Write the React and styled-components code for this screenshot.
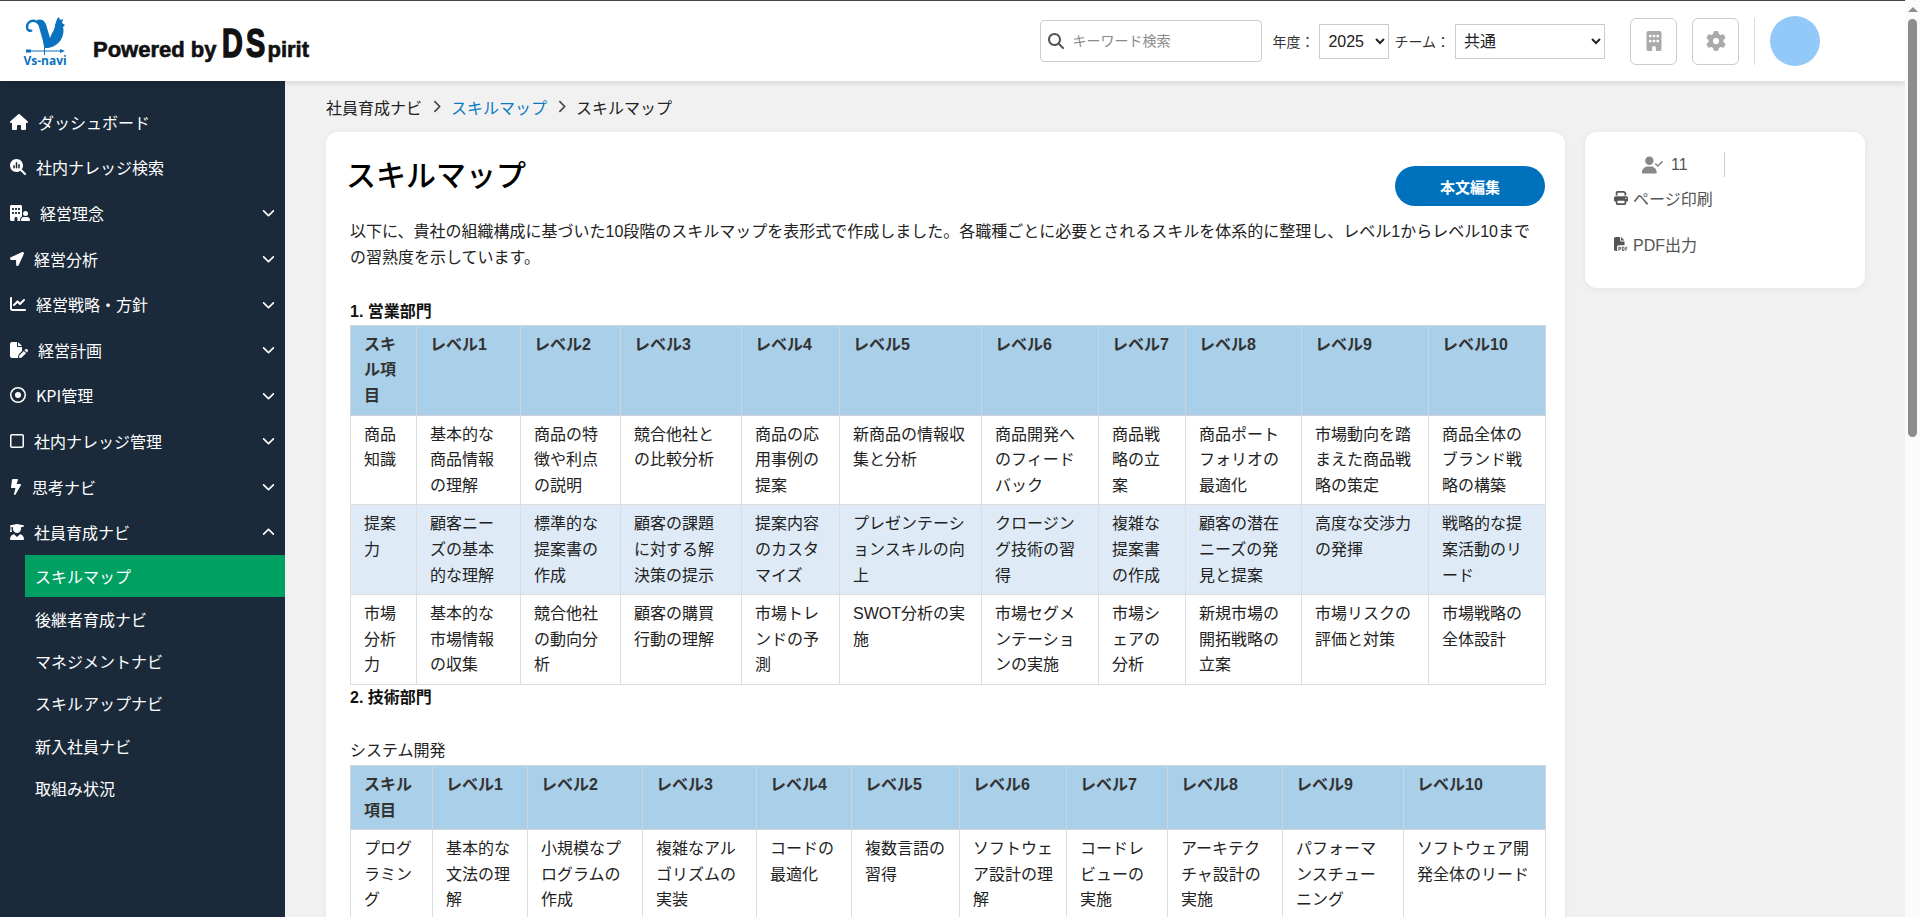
import React from "react";
import styled, { createGlobalStyle } from "styled-components";
import { FaBolt, FaLocationArrow } from "react-icons/fa";
import {
  FaHouse, FaMagnifyingGlassChart, FaBuildingUser, FaChartLine, FaFilePen,
  FaUserGraduate, FaChevronDown, FaChevronUp, FaChevronRight, FaMagnifyingGlass,
  FaBuilding, FaGear, FaUserCheck, FaPrint, FaFilePdf, FaRegCircleDot, FaRegSquare,
} from "react-icons/fa6";

const FONT = `"Liberation Sans", "Noto Sans CJK JP", sans-serif`;

const GlobalStyle = createGlobalStyle`
  body {
    margin: 0;
    background: #f1f1f1;
    color: #222;
    font-family: ${FONT};
    font-size: 16px;
  }
`;

const Viewport = styled.div`
  height: 100vh;
  display: flex;
  overflow: hidden;
`;

const Scroller = styled.div`
  flex: 1;
  min-width: 0;
  overflow-x: hidden;
  overflow-y: auto;
  scrollbar-width: none;
`;

// the browser's own scrollbar is not painted in the photograph, so it is drawn here
const ScrollRail = styled.div`
  width: 15px;
  flex: none;
  display: flex;
  flex-direction: column;
  align-items: center;
  background: #fbfbfb;
  padding-top: 7px;
`;

const ScrollArrow = styled.div`
  width: 0;
  height: 0;
  border-left: 5px solid transparent;
  border-right: 5px solid transparent;
  border-bottom: 5px solid #8d8d8d;
  margin-bottom: 7px;
`;

const ScrollThumb = styled.div`
  width: 9px;
  height: 418px;
  border-radius: 5px;
  background: #8d8d8d;
`;

const Page = styled.div`
  min-height: 1946px;
  display: flex;
  flex-direction: column;
`;

const Header = styled.header`
  height: 80px;
  flex: none;
  display: flex;
  align-items: center;
  justify-content: space-between;
  background: #fff;
  border-top: 1px solid #444;
  box-shadow: 0 2px 6px rgba(0, 0, 0, 0.12);
  position: relative;
  z-index: 2;
  padding: 0 85px 0 22px;
`;

const Brand = styled.div`
  display: flex;
  align-items: flex-end;
  gap: 25px;
`;

const LogoMark = styled.div`
  width: 46px;
  display: flex;
  flex-direction: column;
  align-items: center;
`;

const LogoName = styled.span`
  color: #0b72c0;
  font-family: "Open Sans", sans-serif;
  font-size: 12px;
  font-weight: 700;
  line-height: 12px;
  white-space: nowrap;
`;

const Powered = styled.div`
  display: flex;
  align-items: baseline;
  color: #111;
  font-weight: 700;
  font-size: 22px;
  line-height: 30px;
  white-space: nowrap;
  margin-bottom: 2px;
  -webkit-text-stroke: 0.6px #111;
`;

const BigLetter = styled.span`
  display: inline-block;
  width: 21px;
  font-size: 40px;
  line-height: 30px;
  transform: scaleX(0.72);
  transform-origin: left bottom;
  margin-left: ${(p) => p.$gap || 0}px;
  -webkit-text-stroke: 1.6px #111;
`;

const Tools = styled.div`
  display: flex;
  align-items: center;
`;

const SearchBox = styled.label`
  width: 222px;
  height: 42px;
  box-sizing: border-box;
  display: flex;
  align-items: center;
  gap: 6px;
  padding: 0 7px;
  border: 1px solid #ccc;
  border-radius: 4px;
  background: #fff;
  color: #555;
  margin-right: 10px;
  svg {
    width: 16px;
    height: 16px;
  }
`;

const SearchInput = styled.input`
  border: 0;
  outline: 0;
  min-width: 0;
  flex: 1;
  font: 14px ${FONT};
  &::placeholder {
    color: #8a8a8a;
  }
`;

const FieldLabel = styled.span`
  font-size: 14px;
  color: #333;
  white-space: nowrap;
  margin-right: ${(p) => p.$space}px;
`;

const Select = styled.select`
  height: 35px;
  width: ${(p) => p.$width}px;
  box-sizing: border-box;
  border: 1px solid #ccc;
  border-radius: 0;
  background: #fff;
  color: #222;
  padding: 0 4px;
  font: 16px ${FONT};
  margin-right: ${(p) => p.$space || 0}px;
`;

const SquareButton = styled.button`
  width: 47px;
  height: 47px;
  box-sizing: border-box;
  display: flex;
  align-items: center;
  justify-content: center;
  background: #fff;
  border: 1px solid #ccc;
  border-radius: 6px;
  color: #aaa;
  margin-left: ${(p) => p.$space}px;
  svg {
    width: 20px;
    height: 20px;
  }
`;

const Divider = styled.div`
  width: 1px;
  height: 47px;
  background: #ddd;
  margin: 0 15px;
`;

const Avatar = styled.div`
  width: 50px;
  height: 50px;
  border-radius: 50%;
  background: #93c9f9;
`;

const Body = styled.div`
  flex: 1;
  display: flex;
  align-items: stretch;
`;

const Sidebar = styled.nav`
  width: 285px;
  flex: none;
  box-sizing: border-box;
  background: #1a2a3a;
  color: #fff;
  padding-top: 18px;
`;

const NavItem = styled.div`
  height: 45.6px;
  display: flex;
  align-items: center;
  gap: 10px;
  padding: 0 10px;
  font-family: "Noto Sans CJK JP", sans-serif;
  font-size: 16px;
  white-space: nowrap;
`;

const NavIcon = styled.span`
  display: block;
  flex: none;
  width: ${(p) => p.$width}px;
  height: 16px;
  svg {
    display: block;
    width: 100%;
    height: 100%;
  }
`;

const NavChevron = styled.span`
  margin-left: auto;
  display: flex;
  svg {
    width: 13px;
    height: 13px;
  }
`;

const SubMenu = styled.div`
  padding-left: 25px;
`;

const SubItem = styled.div`
  height: 42.4px;
  display: flex;
  align-items: center;
  padding-left: 10px;
  font-family: "Noto Sans CJK JP", sans-serif;
  font-size: 16px;
  background: ${(p) => (p.$active ? "#00a062" : "transparent")};
`;

const Main = styled.main`
  flex: 1;
  min-width: 0;
  padding: 0 40px 0 41px;
`;

const Breadcrumb = styled.div`
  height: 51px;
  display: flex;
  align-items: center;
  gap: 9px;
  font-size: 16px;
  color: #222;
  svg {
    width: 11px;
    height: 13px;
    color: #444;
  }
`;

const CrumbLink = styled.a`
  color: #0b7ac4;
`;

const Columns = styled.div`
  display: flex;
  align-items: flex-start;
  gap: 20px;
`;

const Card = styled.section`
  background: #fff;
  border-radius: 12px;
  box-shadow: 0 1px 6px rgba(0, 0, 0, 0.06);
`;

const ContentCard = styled(Card)`
  flex: 1;
  min-width: 0;
  box-sizing: border-box;
  padding: 24px 20px 40px;
`;

const TitleRow = styled.div`
  display: flex;
  justify-content: space-between;
  align-items: flex-start;
`;

const Title = styled.h1`
  margin: 0;
  font-size: 30px;
  line-height: 40px;
  font-weight: 500;
  color: #000;
`;

const EditButton = styled.button`
  width: 150px;
  height: 40px;
  margin-top: 10px;
  border: 0;
  border-radius: 20px;
  background: #0071bc;
  color: #fff;
  font: 700 15px ${FONT};
`;

const Article = styled.div`
  padding-left: 4px;
  line-height: 25.6px;
`;

const Lead = styled.p`
  margin: 13px 0 29px;
`;

const Heading = styled.div`
  font-weight: 700;
  color: #111;
  margin-bottom: ${(p) => p.$after || 0}px;
`;

const SubHeading = styled.div`
  margin-bottom: 2px;
  color: #222;
`;

const Table = styled.table`
  width: 100%;
  table-layout: fixed;
  border-collapse: collapse;
  line-height: 25.6px;
`;

const Th = styled.th`
  background: #aacfe9;
  border: 1px solid #cfd4d8;
  padding: 6px 13px;
  text-align: left;
  vertical-align: top;
  font-weight: 700;
  color: #333;
`;

const Tr = styled.tr`
  &:nth-child(even) td {
    background: #deebf7;
  }
`;

const Td = styled.td`
  background: #fff;
  border: 1px solid #ddd;
  padding: 6px 13px;
  vertical-align: top;
  color: #222;
`;

const SideCard = styled(Card)`
  width: 280px;
  height: 156px;
  flex: none;
  box-sizing: border-box;
  padding: 20px 29px;
  color: #555;
`;

const ViewRow = styled.div`
  display: flex;
  align-items: center;
  height: 25px;
  padding-left: 28px;
  gap: 8px;
  color: #555;
  svg {
    width: 21px;
    height: 18px;
    color: #888;
  }
`;

const ViewDivider = styled.span`
  width: 1px;
  height: 25px;
  background: #ccc;
  margin-left: 28px;
`;

const SideAction = styled.div`
  display: flex;
  align-items: center;
  gap: 5px;
  height: 24px;
  margin-top: ${(p) => p.$top}px;
  color: #555;
  svg {
    width: 14px;
    height: 14px;
  }
`;

const Logo = () => (
  <svg width="42" height="39" viewBox="0 0 42 39">
    <path d="M21 30C20 20 19 10 13 6C8 3 3 6 3 11C3 14 6 16 8 14" fill="none" stroke="#0b72c0" strokeWidth="2.4" />
    <path d="M13 4C18 2 22 5 23 12L26 22C28 16 31 14 31 9L33 3L35 1L36 4L39 3L38 7L41 9L39 11C41 18 37 30 24 32L21 32Z" fill="#0b72c0" />
    <path d="M2 35H38" stroke="#0b72c0" strokeWidth="1" />
    <path d="M20.5 26V39" stroke="#0b72c0" strokeWidth="1" />
    <path d="M2 33.5H7V36.5H2ZM36 33L41 35L36 37Z" fill="#0b72c0" />
  </svg>
);

const menu = [
  { label: "ダッシュボード", icon: <FaHouse />, width: 18 },
  { label: "社内ナレッジ検索", icon: <FaMagnifyingGlassChart />, width: 16 },
  { label: "経営理念", icon: <FaBuildingUser />, width: 20, more: "down" },
  { label: "経営分析", icon: <FaLocationArrow />, width: 14, more: "down" },
  { label: "経営戦略・方針", icon: <FaChartLine />, width: 16, more: "down" },
  { label: "経営計画", icon: <FaFilePen />, width: 18, more: "down" },
  { label: "KPI管理", icon: <FaRegCircleDot />, width: 16, more: "down" },
  { label: "社内ナレッジ管理", icon: <FaRegSquare />, width: 14, more: "down" },
  { label: "思考ナビ", icon: <FaBolt />, width: 12, more: "down" },
  { label: "社員育成ナビ", icon: <FaUserGraduate />, width: 14, more: "up" },
];

const subMenu = ["スキルマップ", "後継者育成ナビ", "マネジメントナビ", "スキルアップナビ", "新入社員ナビ", "取組み状況"];

const levels = ["レベル1", "レベル2", "レベル3", "レベル4", "レベル5", "レベル6", "レベル7", "レベル8", "レベル9", "レベル10"];

const salesWidths = [66, 104, 100, 121, 98, 142, 117, 87, 116, 127, 117];
const salesRows = [
  ["商品知識", "基本的な商品情報の理解", "商品の特徴や利点の説明", "競合他社との比較分析", "商品の応用事例の提案", "新商品の情報収集と分析", "商品開発へのフィードバック", "商品戦略の立案", "商品ポートフォリオの最適化", "市場動向を踏まえた商品戦略の策定", "商品全体のブランド戦略の構築"],
  ["提案力", "顧客ニーズの基本的な理解", "標準的な提案書の作成", "顧客の課題に対する解決策の提示", "提案内容のカスタマイズ", "プレゼンテーションスキルの向上", "クロージング技術の習得", "複雑な提案書の作成", "顧客の潜在ニーズの発見と提案", "高度な交渉力の発揮", "戦略的な提案活動のリード"],
  ["市場分析力", "基本的な市場情報の収集", "競合他社の動向分析", "顧客の購買行動の理解", "市場トレンドの予測", "SWOT分析の実施", "市場セグメンテーションの実施", "市場シェアの分析", "新規市場の開拓戦略の立案", "市場リスクの評価と対策", "市場戦略の全体設計"],
];

const systemWidths = [82, 95, 115, 114, 95, 108, 107, 101, 115, 121, 142];
const systemRows = [
  ["プログラミング", "基本的な文法の理解", "小規模なプログラムの作成", "複雑なアルゴリズムの実装", "コードの最適化", "複数言語の習得", "ソフトウェア設計の理解", "コードレビューの実施", "アーキテクチャ設計の実施", "パフォーマンスチューニング", "ソフトウェア開発全体のリード"],
];

const SkillTable = ({ widths, rows }) => (
  <Table>
    <colgroup>
      {widths.map((w, i) => <col key={i} width={w} />)}
    </colgroup>
    <thead>
      <tr>
        <Th>スキル項目</Th>
        {levels.map((level) => <Th key={level}>{level}</Th>)}
      </tr>
    </thead>
    <tbody>
      {rows.map((row) => (
        <Tr key={row[0]}>
          {row.map((cell, i) => <Td key={i}>{cell}</Td>)}
        </Tr>
      ))}
    </tbody>
  </Table>
);

const App = () => (
  <Viewport>
    <GlobalStyle />
    <Scroller>
      <Page>
        <Header>
          <Brand>
            <LogoMark>
              <Logo />
              <LogoName>Vs-navi</LogoName>
            </LogoMark>
            <Powered>
              Powered by<BigLetter $gap={6}>D</BigLetter><BigLetter $gap={3}>S</BigLetter>pirit
            </Powered>
          </Brand>
          <Tools>
            <SearchBox>
              <FaMagnifyingGlass />
              <SearchInput placeholder="キーワード検索" />
            </SearchBox>
            <FieldLabel $space={5}>年度：</FieldLabel>
            <Select $width={70} $space={5} defaultValue="2025">
              <option>2025</option>
            </Select>
            <FieldLabel $space={5}>チーム：</FieldLabel>
            <Select $width={150} defaultValue="共通">
              <option>共通</option>
            </Select>
            <SquareButton $space={25}><FaBuilding /></SquareButton>
            <SquareButton $space={15}><FaGear /></SquareButton>
            <Divider />
            <Avatar />
          </Tools>
        </Header>
        <Body>
          <Sidebar>
            {menu.map((item) => (
              <NavItem key={item.label}>
                <NavIcon $width={item.width}>{item.icon}</NavIcon>
                {item.label}
                {item.more && (
                  <NavChevron>{item.more === "up" ? <FaChevronUp /> : <FaChevronDown />}</NavChevron>
                )}
              </NavItem>
            ))}
            <SubMenu>
              {subMenu.map((label, i) => (
                <SubItem key={label} $active={i === 0}>{label}</SubItem>
              ))}
            </SubMenu>
          </Sidebar>
          <Main>
            <Breadcrumb>
              <span>社員育成ナビ</span>
              <FaChevronRight />
              <CrumbLink>スキルマップ</CrumbLink>
              <FaChevronRight />
              <span>スキルマップ</span>
            </Breadcrumb>
            <Columns>
              <ContentCard>
                <TitleRow>
                  <Title>スキルマップ</Title>
                  <EditButton>本文編集</EditButton>
                </TitleRow>
                <Article>
                  <Lead>
                    以下に、貴社の組織構成に基づいた10段階のスキルマップを表形式で作成しました。各職種ごとに必要とされるスキルを体系的に整理し、レベル1からレベル10までの習熟度を示しています。
                  </Lead>
                  <Heading>1. 営業部門</Heading>
                  <SkillTable widths={salesWidths} rows={salesRows} />
                  <Heading $after={27}>2. 技術部門</Heading>
                  <SubHeading>システム開発</SubHeading>
                  <SkillTable widths={systemWidths} rows={systemRows} />
                </Article>
              </ContentCard>
              <SideCard>
                <ViewRow>
                  <FaUserCheck />
                  <span>11</span>
                  <ViewDivider />
                </ViewRow>
                <SideAction $top={9}><FaPrint />ページ印刷</SideAction>
                <SideAction $top={22}><FaFilePdf />PDF出力</SideAction>
              </SideCard>
            </Columns>
          </Main>
        </Body>
      </Page>
    </Scroller>
    <ScrollRail>
      <ScrollArrow />
      <ScrollThumb />
    </ScrollRail>
  </Viewport>
);

export default App;
